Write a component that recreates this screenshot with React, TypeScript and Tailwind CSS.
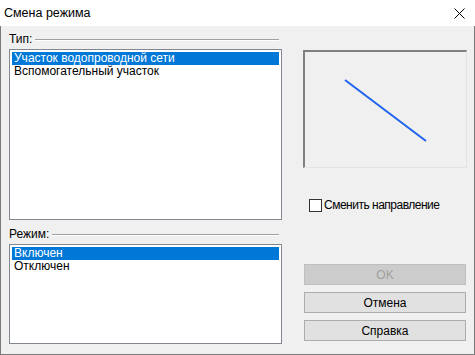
import React from 'react';

const FONT = { fontFamily: '"Liberation Sans", Arial, sans-serif' };

const GroupLabel: React.FC<{ text: string }> = ({ text }) => (
  <div className="flex items-center h-[13px] text-[12px] leading-[13px] text-black">
    <span className="pr-[3px]">{text}</span>
    <div className="flex-1 mr-[3px] border-t border-t-[#a0a0a0] border-b border-b-white h-[2px] mt-[1px]" />
  </div>
);

const ListBox: React.FC<{ items: string[]; height: string }> = ({ items, height }) => (
  <div className={`bg-white border border-[#828790] p-[2px] ${height}`}>
    {items.map((it, i) => (
      <div
        key={it}
        className={`h-[13px] leading-[13px] text-[12px] pl-[2px] whitespace-nowrap ${
          i === 0 ? 'bg-[#0078d7] text-white' : 'text-black'
        }`}
      >
        {it}
      </div>
    ))}
  </div>
);

const Button: React.FC<{ text: string; disabled?: boolean }> = ({ text, disabled }) => (
  <div
    className={`h-[21px] w-[162px] flex items-center justify-center text-[12px] border ${
      disabled ? 'bg-[#cccccc] border-[#bfbfbf] text-[#a0a0a0]' : 'bg-[#e1e1e1] border-[#adadad] text-black'
    }`}
  >
    {text}
  </div>
);

export default function App() {
  return (
    <div className="w-[475px] h-[355px] flex flex-col bg-white select-none" style={FONT}>
      {/* title bar */}
      <div className="h-[26px] flex items-center justify-between pl-[4px] pr-[10px] bg-white">
        <span className="text-[12.5px] text-black">Смена режима</span>
        <svg width="11" height="11" viewBox="0 0 11 11">
          <path d="M0.5 0.5 L10.5 10.5 M10.5 0.5 L0.5 10.5" stroke="#000" strokeWidth="1" />
        </svg>
      </div>

      {/* body */}
      <div className="flex-1 bg-[#f0f0f0] border-l border-r border-b border-[#7a7a7a] flex">
        <div className="w-[273px] ml-[8px] pt-[7px] flex flex-col">
          <GroupLabel text="Тип:" />
          <div className="mt-[3px]">
            <ListBox items={['Участок водопроводной сети', 'Вспомогательный участок']} height="h-[171px]" />
          </div>
          <div className="mt-[8px]">
            <GroupLabel text="Режим:" />
          </div>
          <div className="mt-[3px]">
            <ListBox items={['Включен', 'Отключен']} height="h-[100px]" />
          </div>
        </div>

        <div className="ml-[21px] pt-[24px] flex flex-col">
          <div className="w-[164px] h-[118px] border-t-2 border-l-2 border-t-[#808080] border-l-[#808080] border-r border-b border-r-[#e3e3e3] border-b-[#e3e3e3] bg-[#f0f0f0]">
            <svg width="161" height="115" viewBox="0 0 161 115">
              <line x1="40" y1="28" x2="121" y2="89" stroke="#1f63ec" strokeWidth="2" />
            </svg>
          </div>

          <label className="flex items-center mt-[31px] ml-[6px] h-[13px]">
            <span className="w-[13px] h-[13px] border border-[#333333] bg-white" />
            <span className="ml-[2px] text-[12px] tracking-[-0.5px] text-black leading-[13px]">Сменить направление</span>
          </label>

          <div className="ml-[1px] mt-[52px] flex flex-col gap-[7px]">
            <Button text="OK" disabled />
            <Button text="Отмена" />
            <Button text="Справка" />
          </div>
        </div>
      </div>
    </div>
  );
}
